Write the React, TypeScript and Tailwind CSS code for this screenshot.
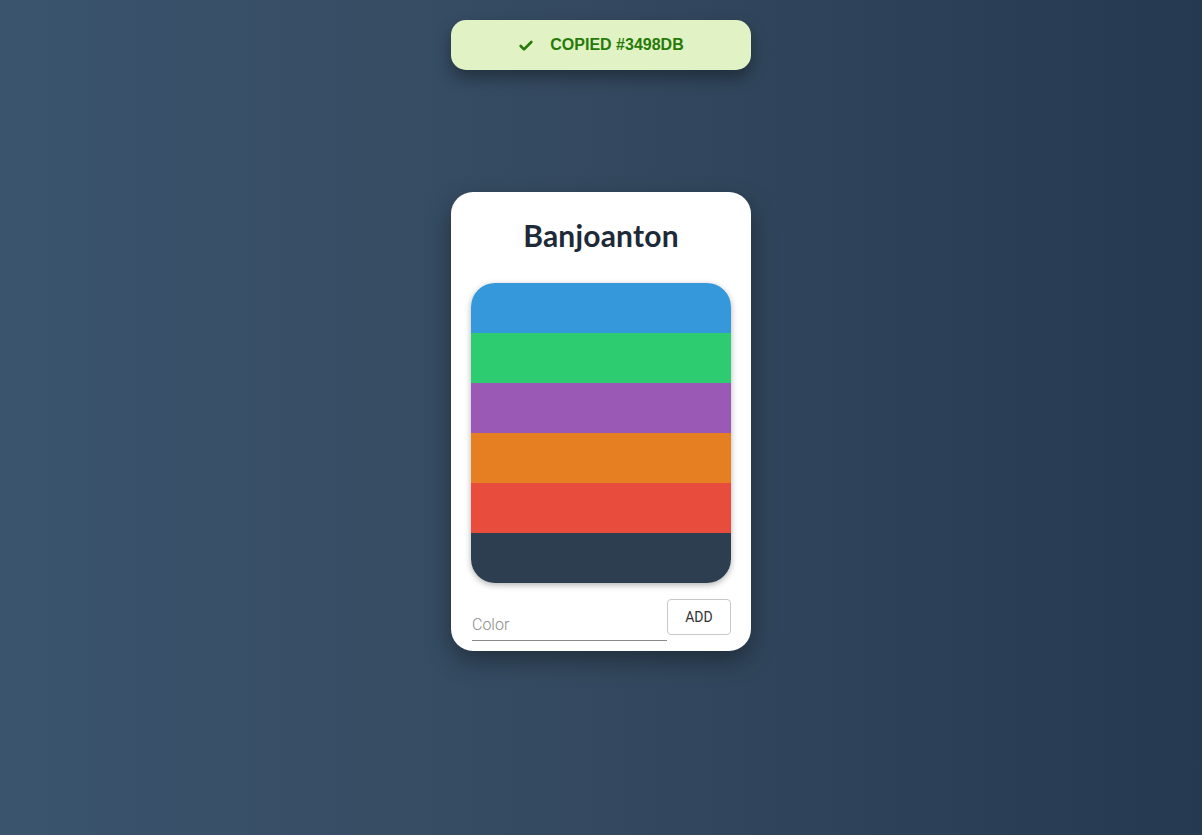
import { Check } from "lucide-react";

const colors = ["#3498db", "#2ecc71", "#9b59b6", "#e67e22", "#e74c3c", "#2c3e50"];

export default function App() {
  return (
    <div className="min-h-[835px] w-full bg-[linear-gradient(90deg,#3a546d_0%,#34495f_50%,#253a50_100%)] flex flex-col items-center">
      {/* toast */}
      <div className="mt-5 w-[300px] h-[50px] rounded-[15px] bg-[#e1f3c5] shadow-[0_8px_16px_rgba(0,0,0,0.35)] flex items-center justify-center gap-[16px] font-['Liberation_Sans',Arial,sans-serif] font-bold text-[16px] text-[#277a08]">
        <Check size={16} strokeWidth={4} className="mt-px" />
        <span>COPIED #3498DB</span>
      </div>

      {/* card */}
      <div className="mt-[122px] w-[300px] bg-white rounded-[22px] shadow-[0_10px_24px_rgba(0,0,0,0.35)] px-5 pt-[23px] pb-[10px]">
        <h1 className="text-center font-['Lato',sans-serif] font-bold text-[30px] leading-[40px] text-[#1e2a38] tracking-[0.2px]">
          Banjoanton
        </h1>
        <div className="mt-[28px] rounded-[24px] overflow-hidden shadow-[0_2px_6px_rgba(0,0,0,0.3)]">
          {colors.map((c) => (
            <div key={c} className="h-[50px] cursor-pointer" style={{ backgroundColor: c }} />
          ))}
        </div>
        <div className="mt-[16px] flex items-start">
          <input
            placeholder="Color"
            className="mt-[11px] w-[195px] ml-px h-[31px] pb-[2px] border-b border-[#8a8a8a] outline-none font-['Roboto',sans-serif] font-light text-[16px] text-[#333] placeholder:text-[#8a8a8a]"
          />
          <button className="ml-auto w-[64px] h-[36px] border border-[#c8c8c8] rounded-[4px] font-['Roboto',sans-serif] font-normal text-[14px] text-[#333]">
            ADD
          </button>
        </div>
      </div>
    </div>
  );
}
